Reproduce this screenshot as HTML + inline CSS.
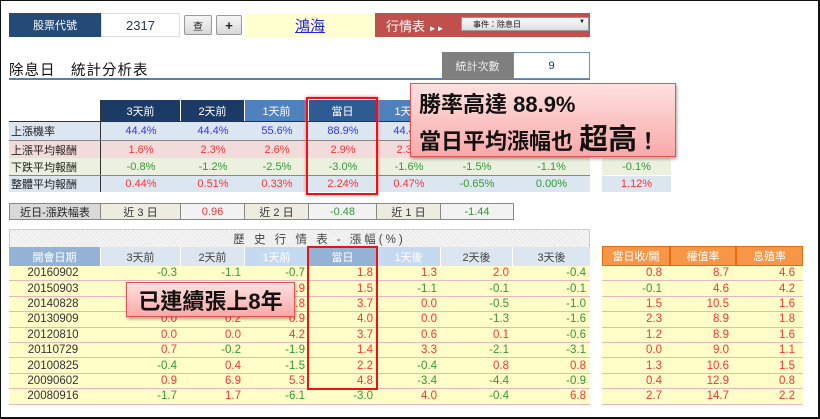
<!DOCTYPE html>
<html><head><meta charset="utf-8"><style>
*{margin:0;padding:0;box-sizing:border-box}
body{width:820px;height:419px;background:#fff;position:relative;overflow:hidden;font-family:"Liberation Sans","Noto Sans CJK TC",sans-serif;font-size:11px;color:#333}
.a{position:absolute}
.c{display:flex;align-items:center;justify-content:center}
.red{color:#ff3333}.grn{color:#339933}.blu{color:#3333ff}
.row{position:absolute;left:9px;height:18px;display:flex}
.row div{height:100%;display:flex;align-items:center;justify-content:center}
.h{position:absolute;display:flex;height:15.4px;border-bottom:1px solid #e6b8b7;background:#fffdc8}
.h div{height:100%;display:flex;align-items:center;justify-content:flex-end;padding-right:4px;font-size:11.5px}
</style></head><body>
<div class="a" style="left:0;top:0;width:820px;height:419px;border:2px solid #111;border-left-width:1px;border-top-width:1px"></div>

<div class="a c" style="left:9px;top:13px;width:92px;height:24px;background:#244a78;color:#fff;font-size:11px">股票代號</div>
<div class="a c" style="left:101px;top:13px;width:79px;height:24px;background:#fff;border:1px solid #ddd;color:#1f3864;font-size:13px">2317</div>
<div class="a c" style="left:184px;top:15px;width:28px;height:20px;background:linear-gradient(#f6f6f6,#d8d8d8);border:1px solid #999;border-radius:2px;font-size:10px;color:#222">查</div>
<div class="a c" style="left:216px;top:15px;width:26px;height:20px;background:linear-gradient(#f6f6f6,#d8d8d8);border:1px solid #999;border-radius:2px;font-size:13px;font-weight:bold;color:#222">+</div>
<div class="a c" style="left:245px;top:13px;width:130px;height:24px;background:#ffffd0"><span style="color:#2222ee;text-decoration:underline;font-size:15px">鴻海</span></div>
<div class="a" style="left:375px;top:13px;width:215px;height:24px;background:#c0504d"></div>
<div class="a" style="left:386px;top:16px;color:#fff;font-size:13px">行情表 <span style="font-size:8px">►►</span></div>
<div class="a" style="left:461px;top:17px;width:128px;height:14px;background:linear-gradient(#fafafa,#ddd);border:1px solid #999;font-size:8px;color:#111;padding:1px 0 0 11px">事件：除息日<span style="position:absolute;right:3px;top:1px;font-size:6px">▼</span></div>

<div class="a" style="left:9px;top:59px;font-size:14.5px;color:#111;letter-spacing:1px">除息日　統計分析表</div>
<div class="a" style="left:9px;top:78px;width:581px;height:2px;background:#5b7fad"></div>
<div class="a c" style="left:442px;top:52px;width:71px;height:27px;background:#7f7f7f;color:#eee;font-size:11px">統計次數</div>
<div class="a c" style="left:513px;top:52px;width:77px;height:27px;background:#fff;border:1px solid #6f8fbf;color:#1f3864;font-size:11px">9</div>

<div class="row" style="top:100px;height:21px;color:#fff">
<div style="width:92px;background:#fff;border-right:1px solid #333"></div>
<div style="width:80px;background:#1b3a66;border-right:1px solid #fff">3天前</div>
<div style="width:64px;background:#1b3a66;border-right:1px solid #fff">2天前</div>
<div style="width:64px;background:#4f81bd;border-right:1px solid #fff">1天前</div>
<div style="width:68px;background:#2f5b93;border-right:1px solid #fff">當日</div>
<div style="width:64px;background:#4f81bd;border-right:1px solid #fff">1天後</div>
<div style="width:72px;background:#1b3a66;border-right:1px solid #fff">2天後</div>
<div style="width:77px;background:#1b3a66">3天後</div>
</div>
<div class="row" style="top:121px;height:19px;background:#dce6f1;border-top:1px solid #333">
<div style="width:92px;justify-content:flex-start;padding-left:2px;color:#222;border-right:1px solid #333">上漲機率</div>
<div class="blu" style="width:80px">44.4%</div><div class="blu" style="width:64px">44.4%</div><div class="blu" style="width:64px">55.6%</div><div class="blu" style="width:68px">88.9%</div><div class="blu" style="width:64px">44.4%</div><div class="blu" style="width:72px">44.4%</div><div class="blu" style="width:77px">33.3%</div>
</div>
<div class="row" style="top:140px;height:18px;background:#f2dcdb;border-top:1px solid #888">
<div style="width:92px;justify-content:flex-start;padding-left:2px;color:#222;border-right:1px solid #333">上漲平均報酬</div>
<div class="red" style="width:80px">1.6%</div><div class="red" style="width:64px">2.3%</div><div class="red" style="width:64px">2.6%</div><div class="red" style="width:68px">2.9%</div><div class="red" style="width:64px">2.3%</div><div class="red" style="width:72px">1.0%</div><div class="red" style="width:77px">2.2%</div>
</div>
<div class="row" style="top:158px;height:17px;background:#ebf1de">
<div style="width:92px;justify-content:flex-start;padding-left:2px;color:#222;border-right:1px solid #333">下跌平均報酬</div>
<div class="grn" style="width:80px">-0.8%</div><div class="grn" style="width:64px">-1.2%</div><div class="grn" style="width:64px">-2.5%</div><div class="grn" style="width:68px">-3.0%</div><div class="grn" style="width:64px">-1.6%</div><div class="grn" style="width:72px">-1.5%</div><div class="grn" style="width:77px">-1.1%</div>
</div>
<div class="row" style="top:175px;height:17px;background:#dce6f1;border-top:1px solid #888">
<div style="width:92px;justify-content:flex-start;padding-left:2px;color:#222;border-right:1px solid #333">整體平均報酬</div>
<div class="red" style="width:80px">0.44%</div><div class="red" style="width:64px">0.51%</div><div class="red" style="width:64px">0.33%</div><div class="red" style="width:68px">2.24%</div><div class="red" style="width:64px">0.47%</div><div class="grn" style="width:72px">-0.65%</div><div class="grn" style="width:77px">0.00%</div>
</div>
<div class="a c grn" style="left:602px;top:158px;width:69px;height:17px;background:#ebf1de">-0.1%</div>
<div class="a c red" style="left:602px;top:175px;width:69px;height:17px;background:#dce6f1;border-top:1px solid #fff">1.12%</div>
<div class="a" style="left:306px;top:97px;width:72px;height:98px;border:2px solid #ee1111;box-shadow:0 0 3px #f66"></div>

<div class="row" style="top:203px;height:17px;border:1px solid #888;left:9px;width:505px">
<div style="width:91px;background:#d9d9d9;border-right:1px solid #888;color:#222">近日-漲跌幅表</div>
<div style="width:80px;background:#eeece1;border-right:1px solid #888">近 3 日</div>
<div class="red" style="width:64px;background:#f2f2f2;border-right:1px solid #888">0.96</div>
<div style="width:64px;background:#eeece1;border-right:1px solid #888">近 2 日</div>
<div class="grn" style="width:68px;background:#f2f2f2;border-right:1px solid #888">-0.48</div>
<div style="width:64px;background:#eeece1;border-right:1px solid #888">近 1 日</div>
<div class="grn" style="width:72px;background:#f2f2f2">-1.44</div>
</div>

<div class="a c" style="left:9px;top:229px;width:581px;height:18px;background:repeating-linear-gradient(45deg,#f4f4f4 0 2px,#e8e8e8 2px 3px);border:1px solid #ccc;border-bottom:none;color:#444;font-size:11.5px;letter-spacing:3px;padding-left:40px">歷 史 行 情 表 - 漲幅(%)</div>
<div class="row" style="top:247px;height:19px">
<div style="width:92px;background:#95b3d7;color:#fff;border-right:1px solid #fff">開會日期</div>
<div style="width:80px;background:#dce6f1;color:#444;border-right:1px solid #fff">3天前</div>
<div style="width:64px;background:#dce6f1;color:#444;border-right:1px solid #fff">2天前</div>
<div style="width:64px;background:#c5d9f1;color:#fff;border-right:1px solid #fff">1天前</div>
<div style="width:68px;background:#95b3d7;color:#fff;border-right:1px solid #fff">當日</div>
<div style="width:64px;background:#c5d9f1;color:#fff;border-right:1px solid #fff">1天後</div>
<div style="width:72px;background:#dce6f1;color:#444;border-right:1px solid #fff">2天後</div>
<div style="width:77px;background:#dce6f1;color:#444">3天後</div>
</div>
<div class="a c" style="left:602px;top:246px;width:201px;height:20px;background:#f79646;border:1px solid #e46c0a;color:#fff;display:flex;justify-content:flex-start">
<div class="c" style="width:68px;height:100%;border-right:2px solid #e46c0a">當日收/開</div><div class="c" style="width:66px;height:100%;border-right:2px solid #e46c0a">權值率</div><div class="c" style="width:65px;height:100%">息殖率</div></div>

<div id="hist"></div>
<script>
var d=[["20160902",-0.3,-1.1,-0.7,1.8,1.3,2.0,-0.4,0.8,8.7,4.6],
["20150903",0.5,0.6,0.9,1.5,-1.1,-0.1,-0.1,-0.1,4.6,4.2],
["20140828",0.3,1.1,0.8,3.7,0.0,-0.5,-1.0,1.5,10.5,1.6],
["20130909",0.0,0.2,0.9,4.0,0.0,-1.3,-1.6,2.3,8.9,1.8],
["20120810",0.0,0.0,4.2,3.7,0.6,0.1,-0.6,1.2,8.9,1.6],
["20110729",0.7,-0.2,-1.9,1.4,3.3,-2.1,-3.1,0.0,9.0,1.1],
["20100825",-0.4,0.4,-1.5,2.2,-0.4,0.8,0.8,1.3,10.6,1.5],
["20090602",0.9,6.9,5.3,4.8,-3.4,-4.4,-0.9,0.4,12.9,0.8],
["20080916",-1.7,1.7,-6.1,-3.0,4.0,-0.4,6.8,2.7,14.7,2.2]];
var w=[92,80,64,64,68,64,72,77],w2=[68,67,66],h="";
d.forEach(function(r,i){var t=266+i*15.4;
h+='<div class="h" style="left:9px;top:'+t+'px;width:581px"><div style="width:92px;justify-content:center;color:#333">'+r[0]+'</div>';
for(var j=1;j<8;j++){var v=r[j];var c=v<0?'grn':'red';h+='<div class="'+c+'" style="width:'+w[j]+'px">'+v.toFixed(1)+'</div>';}
h+='</div><div class="h" style="left:602px;top:'+t+'px;width:201px">';
for(var k=0;k<3;k++){var v=r[8+k];h+='<div class="'+(v<0?'grn':'red')+'" style="width:'+w2[k]+'px;padding-right:8px">'+v.toFixed(1)+'</div>';}
h+='</div>';});
document.getElementById('hist').innerHTML=h;
</script>
<div class="a" style="left:307px;top:246px;width:71px;height:144px;border:2px solid #ee1111"></div>

<div class="a" style="left:410px;top:83px;width:266px;height:74px;background:linear-gradient(#ffe0e0,#f9a9a9);border:1px solid #d55;box-shadow:1px 2px 3px rgba(0,0,0,.35);font-weight:bold;color:#111">
<div class="a" style="left:8px;top:3px;font-size:22px;white-space:nowrap">勝率高達 88.9%</div>
<div class="a" style="left:8px;top:32px;font-size:22px;white-space:nowrap">當日平均漲幅也 <span style="font-size:29px">超高</span>！</div>
</div>
<div class="a c" style="left:126px;top:282px;width:169px;height:35px;background:linear-gradient(#ffe0e0,#f9a9a9);border:1px solid #d55;box-shadow:1px 2px 3px rgba(0,0,0,.35);font-weight:bold;color:#111;font-size:22px">已連續張上8年</div>
</body></html>
